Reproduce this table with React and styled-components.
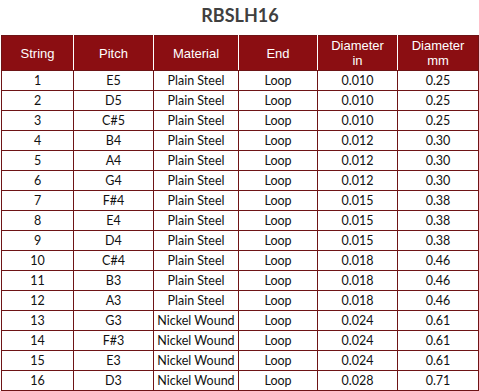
import React from 'react'
import styled, { createGlobalStyle } from 'styled-components'

const Global = createGlobalStyle`
  body {
    margin: 0;
    background: #fff;
  }
`
const Page = styled.div`
  width: 479px;
  padding: 0 0 0 1px;
  box-sizing: border-box;
`
const Title = styled.h1`
  margin: 0;
  height: 35px;
  line-height: 31px;
  text-align: center;
  font-family: Lato, 'Open Sans', sans-serif;
  font-weight: 700;
  font-size: 18px;
  color: #404040;
`
const Table = styled.table`
  width: 477px;
  border-collapse: collapse;
  table-layout: fixed;
  border: 1px solid #6e1416;
`
const HeadCell = styled.th`
  height: 34px;
  padding: 0;
  background: #8b0e12;
  color: #fff;
  font-family: 'Liberation Sans', Arial, sans-serif;
  font-weight: 400;
  font-size: 13px;
  line-height: 15px;
  border-left: 1px solid #fff;
  border-bottom: 1px solid #6e1416;
  &:first-child {
    border-left: 1px solid #6e1416;
  }
`
const Cell = styled.td`
  height: 19px;
  padding: 0;
  text-align: center;
  font-family: Lato, 'Open Sans', sans-serif;
  font-size: 12.5px;
  color: #111;
  border: 1px solid #6e1416;
`

const columns = [
  { label: 'String', width: 72 },
  { label: 'Pitch', width: 80 },
  { label: 'Material', width: 85 },
  { label: 'End', width: 79 },
  { label: ['Diameter', 'in'], width: 80 },
  { label: ['Diameter', 'mm'], width: 81 },
]

const rows = [
  ['1', 'E5', 'Plain Steel', 'Loop', '0.010', '0.25'],
  ['2', 'D5', 'Plain Steel', 'Loop', '0.010', '0.25'],
  ['3', 'C#5', 'Plain Steel', 'Loop', '0.010', '0.25'],
  ['4', 'B4', 'Plain Steel', 'Loop', '0.012', '0.30'],
  ['5', 'A4', 'Plain Steel', 'Loop', '0.012', '0.30'],
  ['6', 'G4', 'Plain Steel', 'Loop', '0.012', '0.30'],
  ['7', 'F#4', 'Plain Steel', 'Loop', '0.015', '0.38'],
  ['8', 'E4', 'Plain Steel', 'Loop', '0.015', '0.38'],
  ['9', 'D4', 'Plain Steel', 'Loop', '0.015', '0.38'],
  ['10', 'C#4', 'Plain Steel', 'Loop', '0.018', '0.46'],
  ['11', 'B3', 'Plain Steel', 'Loop', '0.018', '0.46'],
  ['12', 'A3', 'Plain Steel', 'Loop', '0.018', '0.46'],
  ['13', 'G3', 'Nickel Wound', 'Loop', '0.024', '0.61'],
  ['14', 'F#3', 'Nickel Wound', 'Loop', '0.024', '0.61'],
  ['15', 'E3', 'Nickel Wound', 'Loop', '0.024', '0.61'],
  ['16', 'D3', 'Nickel Wound', 'Loop', '0.028', '0.71'],
]

export default function App() {
  return (
    <Page>
      <Global />
      <Title>RBSLH16</Title>
      <Table>
        <colgroup>
          {columns.map((c, i) => (
            <col key={i} style={{ width: c.width }} />
          ))}
        </colgroup>
        <thead>
          <tr>
            {columns.map((c, i) => (
              <HeadCell key={i}>
                {Array.isArray(c.label) ? (
                  <>
                    {c.label[0]}
                    <br />
                    {c.label[1]}
                  </>
                ) : (
                  c.label
                )}
              </HeadCell>
            ))}
          </tr>
        </thead>
        <tbody>
          {rows.map((r, i) => (
            <tr key={i}>
              {r.map((v, j) => (
                <Cell key={j}>{v}</Cell>
              ))}
            </tr>
          ))}
        </tbody>
      </Table>
    </Page>
  )
}
